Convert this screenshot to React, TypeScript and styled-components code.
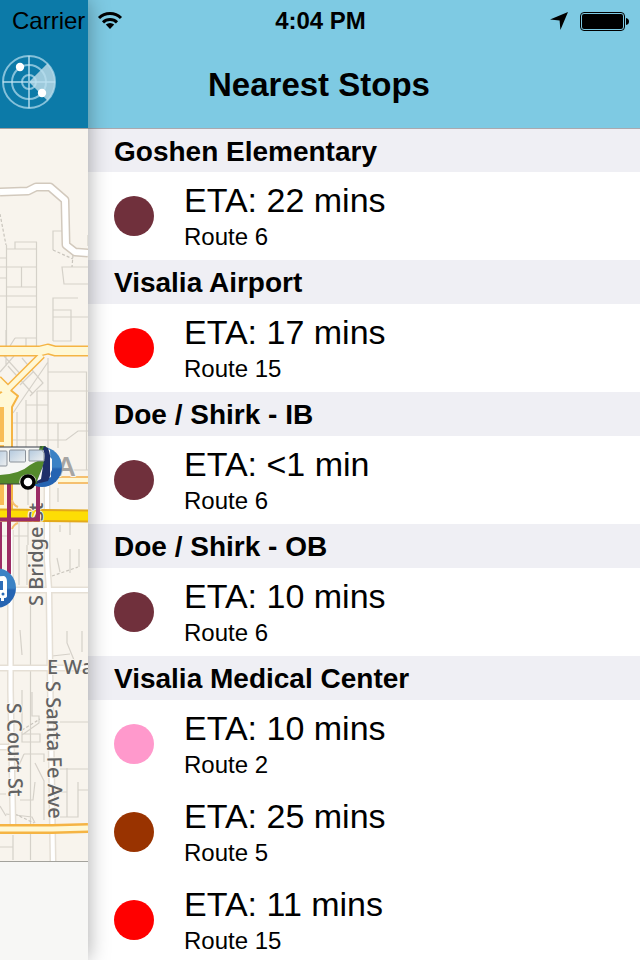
import React from "react";
import styled, { createGlobalStyle } from "styled-components";

const GlobalStyle = createGlobalStyle`
  *, *::before, *::after { box-sizing: border-box; }
  body {
    margin: 0;
    background: #fff;
    color: #000;
    font-family: "Liberation Sans", Helvetica, Arial, sans-serif;
  }
`;

const Screen = styled.div`
  display: grid;
  grid-template-columns: 88px minmax(0, 1fr);
  grid-template-rows: 42px minmax(0, 1fr);
  height: 100vh;
  overflow: hidden;
`;

const StatusBar = styled.div`
  grid-area: 1 / 1 / 2 / 3;
  z-index: 3;
  display: grid;
  grid-template-columns: 1fr auto 1fr;
  align-items: center;
  padding: 0 11px 0 12px;
  font-size: 24px;
  line-height: 42px;
  pointer-events: none;
`;

const StatusGroup = styled.div<{ $end?: boolean }>`
  display: flex;
  align-items: center;
  gap: 12px;
  justify-content: ${(p) => (p.$end ? "flex-end" : "flex-start")};
`;

const Clock = styled.time`
  font-weight: 700;
`;

const MapPanel = styled.div`
  grid-area: 1 / 1 / 3 / 2;
  z-index: 2;
  display: flex;
  flex-direction: column;
  background: #f8f4ed;
  box-shadow: 0 0 20px rgba(0, 0, 0, 0.34);
`;

const MapHeader = styled.header`
  flex: none;
  height: 129px;
  padding-top: 52px;
  background: #0c7aa8;
  border-bottom: 1px solid #a39f9f;
`;

const RadarButton = styled.button`
  display: block;
  width: 60px;
  height: 60px;
  padding: 0;
  border: 0;
  background: none;
`;

const MapDrawing = styled.svg`
  display: block;
  flex: 1;
  min-height: 0;
  width: 100%;
`;

const Toolbar = styled.div`
  flex: none;
  height: 99px;
  background: #f7f7f5;
  border-top: 1px solid #a3a29c;
`;

const Drawer = styled.main`
  grid-area: 1 / 2 / 3 / 3;
  display: flex;
  flex-direction: column;
  min-height: 0;
  background: #fff;
`;

const DrawerHeader = styled.header`
  flex: none;
  height: 129px;
  padding: 65px 90px 0 0;
  background: #7ecae3;
  border-bottom: 1px solid #a9a9b0;
  text-align: center;
`;

const Title = styled.h1`
  margin: 0;
  font-size: 33px;
  line-height: 40px;
`;

const StopList = styled.div`
  flex: 1;
  min-height: 0;
  overflow-y: auto;
  scrollbar-width: none;
`;

const StopName = styled.h2`
  margin: 0;
  padding: 2px 26px 0;
  background: #efeff4;
  font-size: 28px;
  line-height: 42px;

  section:first-child > & {
    line-height: 41px;
  }
`;

const Arrivals = styled.ul`
  margin: 0;
  padding: 0;
  list-style: none;
`;

const Arrival = styled.li`
  display: flex;
  align-items: center;
  gap: 30px;
  height: 88px;
  padding: 0 26px;
`;

const RouteDot = styled.span<{ $color: string }>`
  flex: none;
  width: 40px;
  height: 40px;
  border-radius: 50%;
  background: ${(p) => p.$color};
`;

const Eta = styled.div`
  font-size: 34px;
  line-height: 42px;
`;

const Route = styled.div`
  font-size: 24px;
  line-height: 32px;
`;

const MapLabel = styled.text`
  font-family: "Noto Sans", "Open Sans", sans-serif;
  font-size: 20px;
  font-weight: 500;
  fill: #626262;
  stroke: #f8f4ed;
  stroke-width: 2px;
  stroke-linejoin: round;
  paint-order: stroke;
`;

const AreaLabel = styled(MapLabel)`
  font-size: 27px;
  font-weight: 600;
  fill: #a6a5a3;
`;

const stops = [
  { name: "Goshen Elementary", arrivals: [{ eta: "22 mins", route: "6", color: "#70303c" }] },
  { name: "Visalia Airport", arrivals: [{ eta: "17 mins", route: "15", color: "#ff0000" }] },
  { name: "Doe / Shirk - IB", arrivals: [{ eta: "<1 min", route: "6", color: "#70303c" }] },
  { name: "Doe / Shirk - OB", arrivals: [{ eta: "10 mins", route: "6", color: "#70303c" }] },
  {
    name: "Visalia Medical Center",
    arrivals: [
      { eta: "10 mins", route: "2", color: "#ff99cc" },
      { eta: "25 mins", route: "5", color: "#993300" },
      { eta: "11 mins", route: "15", color: "#ff0000" },
    ],
  },
];

function WifiIcon() {
  return (
    <svg width="26" height="20" viewBox="-1 1 26 20" aria-label="Wi-Fi">
      <g fill="none" stroke="#000" strokeWidth="3">
        <path d="M1 8 A15.5 15.5 0 0 1 23 8" />
        <path d="M5 12.4 A10 10 0 0 1 19 12.4" />
      </g>
      <path d="M12 19 L7.8 14.6 A6 6 0 0 1 16.2 14.6 Z" />
    </svg>
  );
}

function LocationIcon() {
  return (
    <svg width="18" height="18" viewBox="0 0 18 18" aria-label="Location">
      <path d="M18 0 L10.4 18 L9.6 8.6 L0 7.6 Z" />
    </svg>
  );
}

function BatteryIcon() {
  return (
    <svg width="49" height="19" viewBox="0 0 49 19" aria-label="Battery full">
      <rect x="0.5" y="0.5" width="44" height="18" rx="3.5" fill="none" stroke="#000" />
      <rect x="2" y="2" width="41" height="15" rx="2" />
      <path d="M46 6 Q49 6.5 49 9.5 Q49 12.5 46 13 Z" />
    </svg>
  );
}

function RadarIcon() {
  return (
    <svg width="60" height="60" viewBox="0 0 60 60" aria-hidden="true">
      <path d="M29 30 L47.4 11.6 A26 26 0 0 1 47.4 48.4 Z" fill="#fff" fillOpacity="0.6" />
      <g fill="none" stroke="#b9e0ef" strokeOpacity="0.7" strokeWidth="2">
        <circle cx="29" cy="30" r="26" />
        <circle cx="29" cy="30" r="17" />
        <circle cx="29" cy="30" r="7" />
        <path d="M29 4 V56 M3 30 H55" />
      </g>
      <circle cx="20" cy="15" r="4.2" fill="#fff" />
      <circle cx="42" cy="41" r="4.2" fill="#fff" />
    </svg>
  );
}

const parcels = [
  "M6.5 245V346 M36.5 242V346 M15 249V242H37 M6 249H37 M0 258H6 M0 267H37 M0 278H6 M6 287H37 M0 296H37 M6 307H37 M21.5 267V287",
  "M62 231H53V250 M88 267H62L64 284H88 M53 341V298H78 M53 310H71V341H53 M53 317H88 M88 235V246",
  "M15 338H37 M26 338V346 M6 330V366 M15 338L10 346",
  "M48 372H86.5V470 M37 391H88 M37 391V448 M48 358V448 M26 405H48 M13 423H88 M13 440H66L78 431H88 M58 423V448 M26 400V448 M17 412V448 M70 470H88",
  "M48 362L13 413 M22 358L43 383L30 396 M8 366L33 394 M14 356L0 372 M33 372L20 385 M4 356L24 378",
  "M58 488V502 M28 488V505 M70 522V535 M28 522V545 M60 525V532",
  "M0 536H28 M19 522V585 M27 545V585 M30.5 595V860 M70 549V573 M79 549V567 M57 558L60 572 M20 630L22 655 M67 631V643L74 660 M82 631V652 M52 656L70 654 M8 600V640",
  "M22 690V742H40V734H24 M32 692V716H39V723L22 735 M60 722H88 M24 754H44V762 M24 754L16 772 M35 763L44 781V820 M67 768V817 M60 817H78V782 M78 790H88 M60 769H88 M60 792H67 M35 782L33 800H20 M0 806L6 816 M0 794H6 M6 814L32 817L35 823 M13 835L13 860 M0 847H13",
];

const dashed = "M0 214L6 245 M53 250L73 259 M73 255L72 267 M52 576L78 567 M22 730L40 719 M15 814L34 823";

const whiteStreets = "M47 478V560L49 590L50 670L53 861 M10.5 530V690L13 826 M12 590H88 M0 668H88 M0 747H9";

function BusMap() {
  return (
    <MapDrawing viewBox="0 129 88 732" preserveAspectRatio="xMinYMin slice" role="img" aria-label="Map of bus routes">
      <defs>
        <linearGradient id="marker" x1="0" y1="0" x2="0" y2="1">
          <stop offset="0.5" stopColor="#3b82c5" />
          <stop offset="0.55" stopColor="#2564b2" />
        </linearGradient>
        <linearGradient id="glass" x1="0" y1="0" x2="1" y2="1">
          <stop offset="0" stopColor="#b3c9de" />
          <stop offset="1" stopColor="#eef0f0" />
        </linearGradient>
      </defs>
      <rect y="129" width="88" height="732" fill="#f8f4ed" />
      <path d={parcels.join(" ")} fill="none" stroke="#d5d1c9" strokeWidth="1.2" />
      <path d={dashed} fill="none" stroke="#c9c5bd" strokeWidth="1.2" strokeDasharray="3 2" />

      <g fill="none" strokeLinejoin="round">
        <path d="M0 192L28 191L36 187H50L65 200L66 245L75 252L88 253" stroke="#d2c9bd" strokeWidth="9" />
        <path d="M0 192L28 191L36 187H50L65 200L66 245L75 252L88 253" stroke="#fff" strokeWidth="6" />
        <path d={whiteStreets} stroke="#e5dfd5" strokeWidth="7" />
        <path d={whiteStreets} stroke="#fff" strokeWidth="4" />

        <path d="M-2 379L8 389L42 355" stroke="#f5b444" strokeWidth="8" />
        <path d="M8 388L18 396L12 407V510H-2V394Z" fill="#fff8d5" stroke="#f5b444" strokeWidth="2" />
        <path d="M-1 407H4V442H-1Z M-1 445H4V505H-1Z" fill="#f8bd55" />
        <path d="M12 500Q13 505 18 507 M12 529Q14 524 18 523" stroke="#f5c070" strokeWidth="2" />
        <path d="M0 351H40L48 349L55 351H88" stroke="#f5b444" strokeWidth="11" />
        <path d="M58 480H88" stroke="#f5c070" strokeWidth="8" />
        <path d="M0 829H52L88 828" stroke="#f5b444" strokeWidth="10" />
        <g stroke="#fff8d5">
          <path d="M0 351H40L48 349L55 351H88" strokeWidth="8" />
          <path d="M-2 379L8 389L42 355" strokeWidth="5" />
          <path d="M-2 383L8 393" strokeWidth="7" />
          <path d="M58 480H88" strokeWidth="4" />
          <path d="M0 829H52L88 828" strokeWidth="5" />
        </g>
        <path d="M0 515L88 516" stroke="#e3a91b" strokeWidth="13" />
        <path d="M0 515L88 516" stroke="#fddd05" strokeWidth="9" />
      </g>

      <MapLabel transform="translate(43 606) rotate(-90)">S Bridge St</MapLabel>
      <MapLabel x="47" y="674">E Wa</MapLabel>
      <MapLabel transform="translate(46 681) rotate(89)">S Santa Fe Ave</MapLabel>
      <MapLabel transform="translate(7 703) rotate(89)">S Court St</MapLabel>
      <AreaLabel x="57" y="476">A</AreaLabel>

      <path d="M9 482V574 M0 519.5H40 M38 482V521 M0 522V570" fill="none" stroke="#9c2c65" strokeWidth="4" />

      <circle cx="-4" cy="588" r="20" fill="url(#marker)" />
      <path d="M-12 577L4 576Q7 577 7 582V596Q7 598 4 598V601H1V598H-12Z" fill="#fff" />
      <path d="M-8 581H3V590H-8Z" fill="#2d6db8" />
      <circle cx="3" cy="594" r="1.5" fill="#2d6db8" />

      <circle cx="42" cy="467" r="20" fill="url(#marker)" />
      <path d="M0 447H42L50 450L51 477L37 484H0Z" fill="#f5f6f4" />
      <path d="M0 475Q20 474 30 465Q38 460 45 459L38 484H0Z" fill="#548a2c" />
      <path d="M40 446H46L44 450H39Z" fill="#4c852c" />
      <path d="M44 446L48 448Q51 456 51 466Q51 476 48 481L36 484Q40 474 43 465Q46 455 43 449Z" fill="#1f2f69" />
      <path d="M43 466L37 481L41 479Z M50 457V474L52 470V459Z" fill="#f7f8f8" />
      <g fill="url(#glass)" stroke="#8b929a" strokeWidth="1">
        <rect x="-5" y="451" width="12" height="15" rx="1" />
        <rect x="9.5" y="450" width="16" height="12" rx="1" />
        <path d="M29 450H42L44 453V461H29Z" />
      </g>
      <path d="M0 447H42" stroke="#343b45" strokeWidth="1" />
      <path d="M19 482A9 9 0 0 1 36 479L35 484H19Z" fill="#c8d0ba" />
      <circle cx="28" cy="482" r="6" fill="#fff" stroke="#000" strokeWidth="3.5" />
      <path d="M0 484H20" stroke="#39423a" strokeWidth="1" />
    </MapDrawing>
  );
}

export default function App() {
  return (
    <>
      <GlobalStyle />
      <Screen>
        <StatusBar>
          <StatusGroup>
            <span>Carrier</span>
            <WifiIcon />
          </StatusGroup>
          <Clock dateTime="16:04">4:04 PM</Clock>
          <StatusGroup $end>
            <LocationIcon />
            <BatteryIcon />
          </StatusGroup>
        </StatusBar>
        <MapPanel>
          <MapHeader>
            <RadarButton type="button" aria-label="Nearby stops">
              <RadarIcon />
            </RadarButton>
          </MapHeader>
          <BusMap />
          <Toolbar />
        </MapPanel>
        <Drawer>
          <DrawerHeader>
            <Title>Nearest Stops</Title>
          </DrawerHeader>
          <StopList>
            {stops.map((stop) => (
              <section key={stop.name}>
                <StopName>{stop.name}</StopName>
                <Arrivals>
                  {stop.arrivals.map((a) => (
                    <Arrival key={a.route}>
                      <RouteDot $color={a.color} />
                      <div>
                        <Eta>ETA: {a.eta}</Eta>
                        <Route>Route {a.route}</Route>
                      </div>
                    </Arrival>
                  ))}
                </Arrivals>
              </section>
            ))}
          </StopList>
        </Drawer>
      </Screen>
    </>
  );
}
